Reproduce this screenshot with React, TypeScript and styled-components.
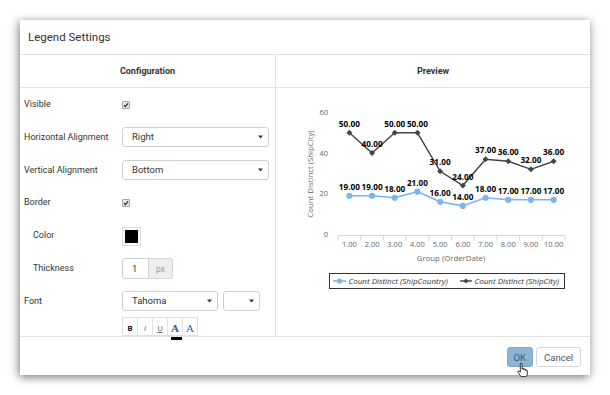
import React from "react";
import styled, { createGlobalStyle } from "styled-components";

const Global = createGlobalStyle`
  html, body { margin: 0; padding: 0; background: #fff; }
  body { font-family: Roboto, "Liberation Sans", sans-serif; }
`;

const Page = styled.div`
  width: 610px;
  height: 395px;
  padding: 20px;
  box-sizing: border-box;
  position: relative;
`;

const Dialog = styled.div`
  width: 570px;
  height: 355px;
  background: #fff;
  box-shadow: -1px 2px 9px rgba(0, 0, 0, 0.55);
  display: flex;
  flex-direction: column;
`;

const Header = styled.div`
  height: 35px;
  box-sizing: border-box;
  border-bottom: 1px solid #e3e3e3;
  display: flex;
  align-items: center;
  padding-left: 8px;
  font-size: 11.5px;
  color: #333;
`;

const Body = styled.div`
  height: 281px;
  display: flex;
`;

const Column = styled.div<{ $left?: boolean }>`
  width: ${(p) => (p.$left ? "256px" : "auto")};
  flex: ${(p) => (p.$left ? "none" : "1")};
  box-sizing: border-box;
  border-right: ${(p) => (p.$left ? "1px solid #e3e3e3" : "none")};
  display: flex;
  flex-direction: column;
`;

const ColumnTitle = styled.div`
  height: 33px;
  box-sizing: border-box;
  border-bottom: 1px solid #e3e3e3;
  display: flex;
  align-items: center;
  justify-content: center;
  font-size: 9px;
  font-weight: 700;
  color: #333;
`;

const Form = styled.div`
  padding-left: 4px;
`;

const Row = styled.div`
  display: grid;
  grid-template-columns: 98px 1fr;
  align-items: center;
  height: 32.75px;
`;

const ToolRow = styled.div`
  display: grid;
  grid-template-columns: 98px 1fr;
`;

const Label = styled.div<{ $indent?: boolean }>`
  font-size: 9px;
  color: #333;
  padding-left: ${(p) => (p.$indent ? "9px" : "0")};
`;

const Controls = styled.div`
  display: flex;
  align-items: center;
  gap: 5px;
`;

const CheckBox = styled.span`
  width: 8px;
  height: 8px;
  margin-top: 2px;
  box-sizing: border-box;
  border: 1px solid #a5a5a5;
  border-radius: 1px;
  background: #e4e4e4;
  display: flex;
  align-items: center;
  justify-content: center;
`;

const SelectBox = styled.div<{ $w: number }>`
  width: ${(p) => p.$w}px;
  height: 20px;
  box-sizing: border-box;
  border: 1px solid #cfcfcf;
  border-radius: 3px;
  background: #fff;
  display: flex;
  align-items: center;
  justify-content: space-between;
  padding: 0 5px 0 9px;
  font-size: 9.5px;
  color: #333;
`;

const Swatch = styled.div`
  width: 19px;
  height: 19px;
  box-sizing: border-box;
  border: 1px solid #dcdcdc;
  padding: 2px;
  margin-top: 2px;
  & > span {
    display: block;
    width: 13px;
    height: 13px;
    background: #000;
  }
`;

const InputGroup = styled.div`
  display: flex;
  height: 21px;
  margin-top: 2px;
`;

const NumInput = styled.div`
  width: 27px;
  box-sizing: border-box;
  border: 1px solid #cfcfcf;
  border-radius: 3px 0 0 3px;
  display: flex;
  align-items: center;
  padding-left: 9px;
  font-size: 9.5px;
  color: #333;
`;

const Addon = styled.div`
  width: 24px;
  box-sizing: border-box;
  border: 1px solid #d5d5d5;
  border-left: none;
  border-radius: 0 3px 3px 0;
  background: #eee;
  display: flex;
  align-items: center;
  justify-content: center;
  font-size: 8.5px;
  color: #999;
`;

const ToolGroup = styled.div`
  display: flex;
`;

const ToolBtn = styled.div<{ $kind: "b" | "i" | "u" | "a" | "h" }>`
  position: relative;
  width: 16px;
  height: 19px;
  box-sizing: border-box;
  border: 1px solid #e0e0e0;
  margin-left: -1px;
  &:first-child { margin-left: 0; }
  display: flex;
  align-items: center;
  justify-content: center;
  padding-top: 3px;
  font-family: ${(p) =>
    p.$kind === "a" || p.$kind === "h"
      ? '"Liberation Serif", "DejaVu Serif", serif'
      : 'Roboto, "Liberation Sans", sans-serif'};
  font-size: ${(p) => (p.$kind === "a" || p.$kind === "h" ? "11px" : "8px")};
  font-weight: ${(p) => (p.$kind === "b" || p.$kind === "a" ? 700 : 400)};
  font-style: ${(p) => (p.$kind === "i" ? "italic" : "normal")};
  text-decoration: ${(p) => (p.$kind === "u" ? "underline" : "none")};
  color: ${(p) =>
    p.$kind === "b" ? "#111" : p.$kind === "u" ? "#666" : p.$kind === "i" ? "#4a78b8" : "#2a58a6"};
`;

const ColorBar = styled.span`
  position: absolute;
  left: 3px;
  right: 0;
  top: calc(100% + 2px);
  height: 3px;
  background: #000;
`;

const Preview = styled.div`
  flex: 1;
  display: flex;
`;

const Footer = styled.div`
  height: 39px;
  box-sizing: border-box;
  border-top: 1px solid #e3e3e3;
  display: flex;
  justify-content: flex-end;
  align-items: flex-start;
  gap: 3px;
  padding: 10px 9px 0 0;
`;

const Button = styled.div<{ $primary?: boolean }>`
  height: 20px;
  box-sizing: border-box;
  padding: 0 ${(p) => (p.$primary ? "6px" : "7px")};
  border-radius: 3px;
  border: 1px solid ${(p) => (p.$primary ? "#7ea8c9" : "#d5d5d5")};
  background: ${(p) => (p.$primary ? "#8cb4d4" : "#fff")};
  color: ${(p) => (p.$primary ? "#2c5e88" : "#555")};
  font-size: 9.5px;
  display: flex;
  align-items: center;
`;

const Cursor = styled.svg`
  position: absolute;
  left: 517px;
  top: 363px;
`;

const Arrow = () => (
  <svg width="5" height="4" viewBox="0 0 5 4">
    <path d="M0 0.5 H5 L2.5 3.5 Z" fill="#333" />
  </svg>
);

const Check = () => (
  <CheckBox>
    <svg width="6" height="6" viewBox="0 0 6 6">
      <path d="M1 3.2 L2.4 4.6 L5 1.3" fill="none" stroke="#222" strokeWidth="1.1" />
    </svg>
  </CheckBox>
);

const Select = ({ w, value }: { w: number; value: string }) => (
  <SelectBox $w={w}>
    <span>{value}</span>
    <Arrow />
  </SelectBox>
);

const shipCountry = [19, 19, 18, 21, 16, 14, 18, 17, 17, 17];
const shipCity = [50, 40, 50, 50, 31, 24, 37, 36, 32, 36];
const X0 = 338;
const CW = 22.7;
const cx = (i: number) => X0 + CW * (i + 0.5);
const cy = (v: number) => 234.3 - v * 2.03;
const BLUE = "#7cb5ec";
const DARK = "#434348";
const CHART_FONT = '"Open Sans", "DejaVu Sans", sans-serif';

const Diamond = ({ x, y, s = 3 }: { x: number; y: number; s?: number }) => (
  <path d={`M${x} ${y - s} L${x + s} ${y} L${x} ${y + s} L${x - s} ${y} Z`} fill={DARK} />
);

const Chart = () => {
  const axisText = { fontFamily: CHART_FONT, fill: "#666" };
  const lblStyle = {
    fontFamily: CHART_FONT,
    fontWeight: 700,
    fontSize: 8.2,
    fill: "#000",
  };
  const legendText = { fontFamily: CHART_FONT, fill: "#333" };
  return (
    <svg width="314" height="248" viewBox="276 88 314 248">
      {[0, 20, 40, 60].map((v) => (
        <text key={v} x={328} y={cy(v) + 2.7} textAnchor="end" fontSize={7.5} style={axisText}>
          {v}
        </text>
      ))}
      <text
        x={0}
        y={0}
        transform="translate(313 174) rotate(-90)"
        textAnchor="middle"
        fontSize={7.8}
        style={axisText}
      >
        Count Distinct (ShipCity)
      </text>
      <line x1={X0} x2={X0 + CW * 10} y1={235.5} y2={235.5} stroke="#ccd6eb" strokeWidth={1} />
      {Array.from({ length: 11 }).map((_, i) => (
        <line
          key={i}
          x1={X0 + CW * i}
          x2={X0 + CW * i}
          y1={235.5}
          y2={240.5}
          stroke="#ccd6eb"
          strokeWidth={1}
        />
      ))}
      {shipCity.map((_, i) => (
        <text key={i} x={cx(i)} y={246.5} textAnchor="middle" fontSize={7.5} style={axisText}>
          {(i + 1).toFixed(2)}
        </text>
      ))}
      <text x={451} y={261} textAnchor="middle" fontSize={7.8} style={axisText}>
        Group (OrderDate)
      </text>

      <polyline
        points={shipCountry.map((v, i) => `${cx(i)},${cy(v)}`).join(" ")}
        fill="none"
        stroke={BLUE}
        strokeWidth={1.6}
      />
      {shipCountry.map((v, i) => (
        <circle key={i} cx={cx(i)} cy={cy(v)} r={3.1} fill={BLUE} />
      ))}
      <polyline
        points={shipCity.map((v, i) => `${cx(i)},${cy(v)}`).join(" ")}
        fill="none"
        stroke={DARK}
        strokeWidth={1.4}
      />
      {shipCity.map((v, i) => (
        <Diamond key={i} x={cx(i)} y={cy(v)} />
      ))}
      {shipCountry.map((v, i) => (
        <text key={i} x={cx(i)} y={cy(v) - 6} textAnchor="middle" style={lblStyle}>
          {v.toFixed(2)}
        </text>
      ))}
      {shipCity.map((v, i) => (
        <text key={i} x={cx(i)} y={cy(v) - 6} textAnchor="middle" style={lblStyle}>
          {v.toFixed(2)}
        </text>
      ))}

      <rect x={329.5} y={273.5} width={235} height={15} fill="#fff" stroke="#333" strokeWidth={1} />
      <line x1={333} x2={346} y1={281} y2={281} stroke={BLUE} strokeWidth={1.6} />
      <circle cx={339.5} cy={281} r={2.6} fill={BLUE} />
      <text x={348.5} y={284} fontSize={8} fontStyle="italic" style={legendText}>
        Count Distinct (ShipCountry)
      </text>
      <line x1={460} x2={472} y1={281} y2={281} stroke={DARK} strokeWidth={1.4} />
      <Diamond x={466} y={281} s={2.6} />
      <text x={474.5} y={284} fontSize={8} fontStyle="italic" style={legendText}>
        Count Distinct (ShipCity)
      </text>
    </svg>
  );
};

export default function App() {
  return (
    <>
      <Global />
      <Page>
        <Dialog>
          <Header>Legend Settings</Header>
          <Body>
            <Column $left>
              <ColumnTitle>Configuration</ColumnTitle>
              <Form>
                <Row>
                  <Label>Visible</Label>
                  <Controls>
                    <Check />
                  </Controls>
                </Row>
                <Row>
                  <Label>Horizontal Alignment</Label>
                  <Controls>
                    <Select w={147} value="Right" />
                  </Controls>
                </Row>
                <Row>
                  <Label>Vertical Alignment</Label>
                  <Controls>
                    <Select w={147} value="Bottom" />
                  </Controls>
                </Row>
                <Row>
                  <Label>Border</Label>
                  <Controls>
                    <Check />
                  </Controls>
                </Row>
                <Row>
                  <Label $indent>Color</Label>
                  <Controls>
                    <Swatch>
                      <span />
                    </Swatch>
                  </Controls>
                </Row>
                <Row>
                  <Label $indent>Thickness</Label>
                  <Controls>
                    <InputGroup>
                      <NumInput>1</NumInput>
                      <Addon>px</Addon>
                    </InputGroup>
                  </Controls>
                </Row>
                <Row>
                  <Label>Font</Label>
                  <Controls>
                    <Select w={96} value="Tahoma" />
                    <Select w={37} value="" />
                  </Controls>
                </Row>
                <ToolRow>
                  <span />
                  <ToolGroup>
                    <ToolBtn $kind="b">B</ToolBtn>
                    <ToolBtn $kind="i">I</ToolBtn>
                    <ToolBtn $kind="u">U</ToolBtn>
                    <ToolBtn $kind="a">
                      A
                      <ColorBar />
                    </ToolBtn>
                    <ToolBtn $kind="h">A</ToolBtn>
                  </ToolGroup>
                </ToolRow>
              </Form>
            </Column>
            <Column>
              <ColumnTitle>Preview</ColumnTitle>
              <Preview>
                <Chart />
              </Preview>
            </Column>
          </Body>
          <Footer>
            <Button $primary>OK</Button>
            <Button>Cancel</Button>
          </Footer>
        </Dialog>
        <Cursor width="11" height="14" viewBox="0 0 12 16">
          <path
            d="M3.5 1.2 a1 1 0 0 1 2 0 V7 a1 1 0 0 1 2 0 V8 a1 1 0 0 1 2 0 V9 a1 1 0 0 1 2 0 V13 c0 1.5 -1 2.5 -2.5 2.5 H5.5 c-1 0 -1.8 -0.5 -2.3 -1.3 L0.8 10.4 a0.9 0.9 0 0 1 1.4 -1.1 L3.5 10.5 Z"
            fill="#fff"
            stroke="#000"
            strokeWidth="0.9"
            strokeLinejoin="round"
          />
        </Cursor>
      </Page>
    </>
  );
}
